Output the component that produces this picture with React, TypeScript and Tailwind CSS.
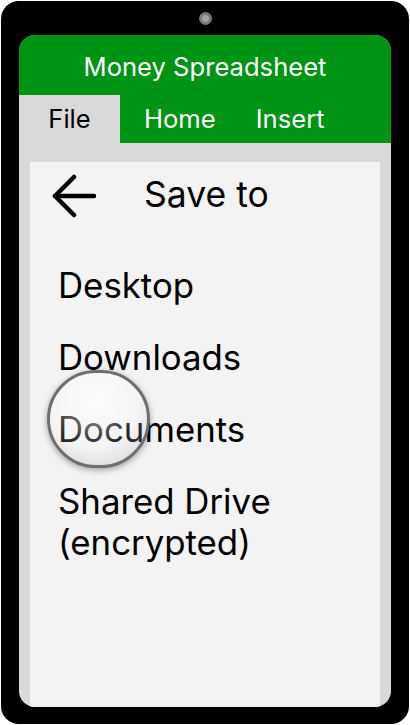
const locations = ["Desktop", "Downloads", "Documents", "Shared Drive\n(encrypted)"];

function BackArrow() {
  return (
    <svg width="44" height="44" viewBox="0 0 44 44" fill="none" stroke="black" strokeWidth="4.5" strokeLinecap="round" strokeLinejoin="round">
      <path d="M42 22H3" />
      <path d="M22 3L3 22L22 41" />
    </svg>
  );
}

export default function App() {
  return (
    <div className="w-[410px] h-[725px] bg-white pt-px pl-px font-['Inter',sans-serif]">
      {/* phone body */}
      <div className="w-[408px] h-[723px] bg-black rounded-[18px] flex flex-col px-[18px] pb-[17px]">
        <div className="h-[34px] shrink-0 flex items-center justify-center">
          <div className="w-[13px] h-[13px] rounded-full bg-[#7a7a7a] flex items-center justify-center">
            <div className="w-[7px] h-[7px] rounded-full bg-[#a3a3a3]" />
          </div>
        </div>

        {/* screen */}
        <div className="flex-1 flex flex-col rounded-[16px] overflow-hidden bg-[#d9d9d9]">
          <div className="bg-[#009414] text-white">
            <div className="h-[60px] flex items-center justify-center text-[25.6px] pt-[4px]">
              Money Spreadsheet
            </div>
            <div className="h-[48px] flex items-center text-[25.6px]">
              <div className="w-[101px] h-full bg-[#d9d9d9] text-black flex items-center justify-center">File</div>
              <div className="ml-[24px]">Home</div>
              <div className="ml-[40px]">Insert</div>
            </div>
          </div>

          <div className="flex-1 flex flex-col pt-[19px] px-[11px]">
            <div className="flex-1 bg-[#f4f3f4] relative text-black">
              <div className="flex items-center mt-[12px] pl-[22px] h-[44px]">
                <BackArrow />
                <span className="ml-[48px] pb-[4px] text-[35.5px] leading-[41px]">Save to</span>
              </div>

              <div className="flex flex-col gap-[31px] pl-[28px] mt-[47px] text-[34.8px] leading-[41px]">
                {locations.map((l) => (
                  <div key={l} className="whitespace-pre-line">
                    {l}
                  </div>
                ))}
              </div>

              {/* touch lens */}
              <div className="absolute left-[17px] top-[208px] w-[103px] h-[98px] rounded-full border-[3px] border-[#6e6e6e] bg-[radial-gradient(circle_at_45%_30%,rgba(255,255,255,0.7),rgba(255,255,255,0.15)_55%,rgba(140,140,140,0.35))] shadow-[0_2px_6px_rgba(0,0,0,0.35)]" />
            </div>
          </div>
        </div>
      </div>
    </div>
  );
}
